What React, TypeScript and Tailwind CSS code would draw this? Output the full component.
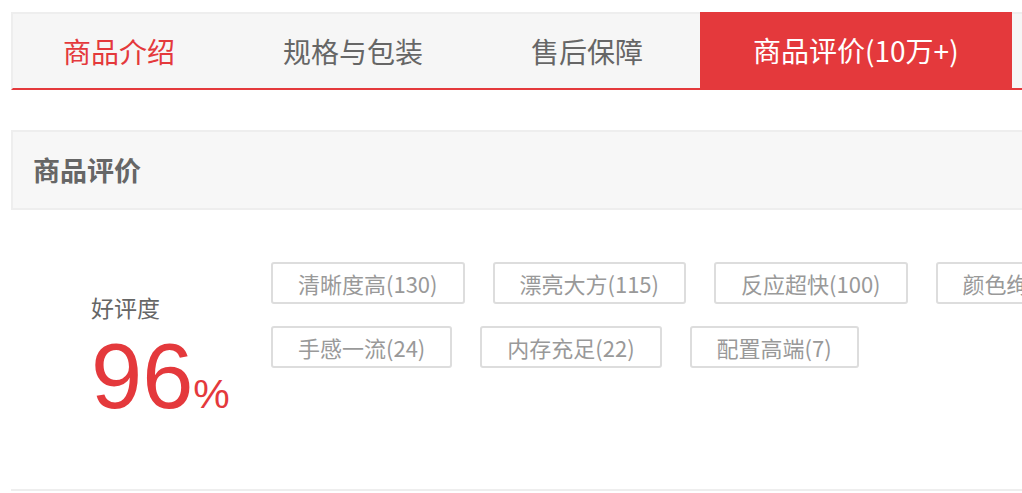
const tabs = ["商品介绍", "规格与包装", "售后保障", "商品评价(10万+)"];

const tagRows = [
  ["清晰度高(130)", "漂亮大方(115)", "反应超快(100)", "颜色绚丽(89)"],
  ["手感一流(24)", "内存充足(22)", "配置高端(7)"],
];

export default function App() {
  return (
    <div
      className="w-[1022px] h-[493px] overflow-hidden bg-white"
      style={{ fontFamily: '"Noto Sans CJK SC", "Noto Sans", sans-serif' }}
    >
      <div className="w-[1100px] pl-[11px] pt-[12px]">
        {/* tab bar */}
        <div className="flex h-[78px] gap-[8px] border-t-2 border-l-2 border-b-2 border-[#eeeeee] border-b-[#e4393c] bg-[#f6f6f6]">
          {tabs.map((t, i) => {
            const active = i === 3;
            return (
              <div
                key={t}
                className={
                  active
                    ? "-mt-[2px] -ml-[1px] flex items-center px-[53px] bg-[#e4393c] text-white text-[28px]"
                    : i === 0
                    ? "flex items-center px-[50px] text-[#e4393c] text-[28px]"
                    : "flex items-center px-[50px] text-[#666666] text-[28px]"
                }
              >
                {t}
              </div>
            );
          })}
        </div>

        {/* heading */}
        <div className="mt-[40px] h-[80px] flex items-center border-2 border-r-0 border-[#eeeeee] bg-[#f7f7f7] pl-[20px]">
          <span className="text-[27px] font-bold text-[#666666]">商品评价</span>
        </div>

        {/* rating + tags */}
        <div className="flex h-[281px] border-b-2 border-[#eeeeee]">
          <div className="w-[260px] shrink-0 pl-[80px] pt-[86px]">
            <div className="text-[23px] leading-none text-[#666666]">好评度</div>
            <div
              className="mt-[11px] flex items-baseline leading-none text-[#e4393c]"
              style={{ fontFamily: '"Liberation Sans", Arial, sans-serif' }}
            >
              <span className="text-[92px] leading-none">96</span>
              <span className="text-[41px] leading-none">%</span>
            </div>
          </div>
          <div className="flex flex-col gap-[22px] pt-[52px]">
            {tagRows.map((row, ri) => (
              <div key={ri} className="flex gap-[28px]">
                {row.map((tag) => (
                  <div
                    key={tag}
                    className="h-[42px] flex items-center whitespace-nowrap rounded-[3px] border-2 border-[#dddddd] px-[25px] text-[22px] text-[#999999]"
                  >
                    {tag}
                  </div>
                ))}
              </div>
            ))}
          </div>
        </div>
      </div>
    </div>
  );
}
